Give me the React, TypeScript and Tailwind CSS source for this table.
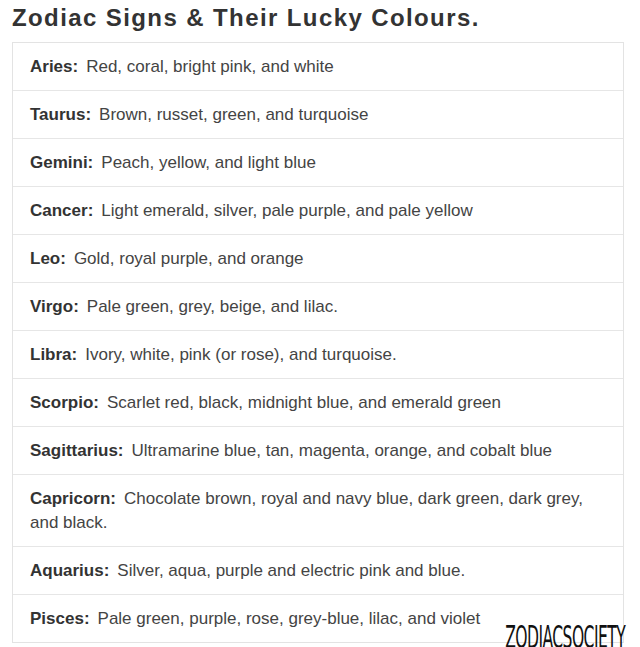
import React from "react";

const rows: [string, string][] = [
  ["Aries:", "Red, coral, bright pink, and white"],
  ["Taurus:", "Brown, russet, green, and turquoise"],
  ["Gemini:", "Peach, yellow, and light blue"],
  ["Cancer:", "Light emerald, silver, pale purple, and pale yellow"],
  ["Leo:", "Gold, royal purple, and orange"],
  ["Virgo:", "Pale green, grey, beige, and lilac."],
  ["Libra:", "Ivory, white, pink (or rose), and turquoise."],
  ["Scorpio:", "Scarlet red, black, midnight blue, and emerald green"],
  ["Sagittarius:", "Ultramarine blue, tan, magenta, orange, and cobalt blue"],
  ["Capricorn:", "Chocolate brown, royal and navy blue, dark green, dark grey, and black."],
  ["Aquarius:", "Silver, aqua, purple and electric pink and blue."],
  ["Pisces:", "Pale green, purple, rose, grey-blue, lilac, and violet"],
];

export default function App() {
  return (
    <div className="w-[640px] h-[647px] bg-white overflow-hidden font-['Liberation_Sans',Arial,sans-serif] text-[#3a3a3a]">
      <h1 className="pl-[12px] pt-[4px] text-[24px] leading-[28px] font-bold tracking-[1.4px] text-[#333]">
        Zodiac Signs &amp; Their Lucky Colours.
      </h1>
      <div className="relative mt-[10px] ml-[12px] w-[612px] border border-[#e3e3e3]">
        {rows.map(([k, v], i) => (
          <div
            key={k}
            className={
              "pl-[17px] pr-[14px] py-[11.5px] text-[17px] leading-6 " +
              (i < rows.length - 1 ? "border-b border-[#e6e6e6]" : "")
            }
          >
            <span className="font-bold text-[#333]">{k}</span>
            <span className="ml-[8px] text-[#444]">{v}</span>
          </div>
        ))}
        <div className="absolute right-[-2px] bottom-[-12px] font-['DejaVu_Sans_Condensed','DejaVu_Sans',sans-serif] font-extralight text-[32px] leading-[34px] text-[#111] tracking-[-1px] origin-right scale-x-[0.54]">
          ZODIACSOCIETY
        </div>
      </div>
    </div>
  );
}
